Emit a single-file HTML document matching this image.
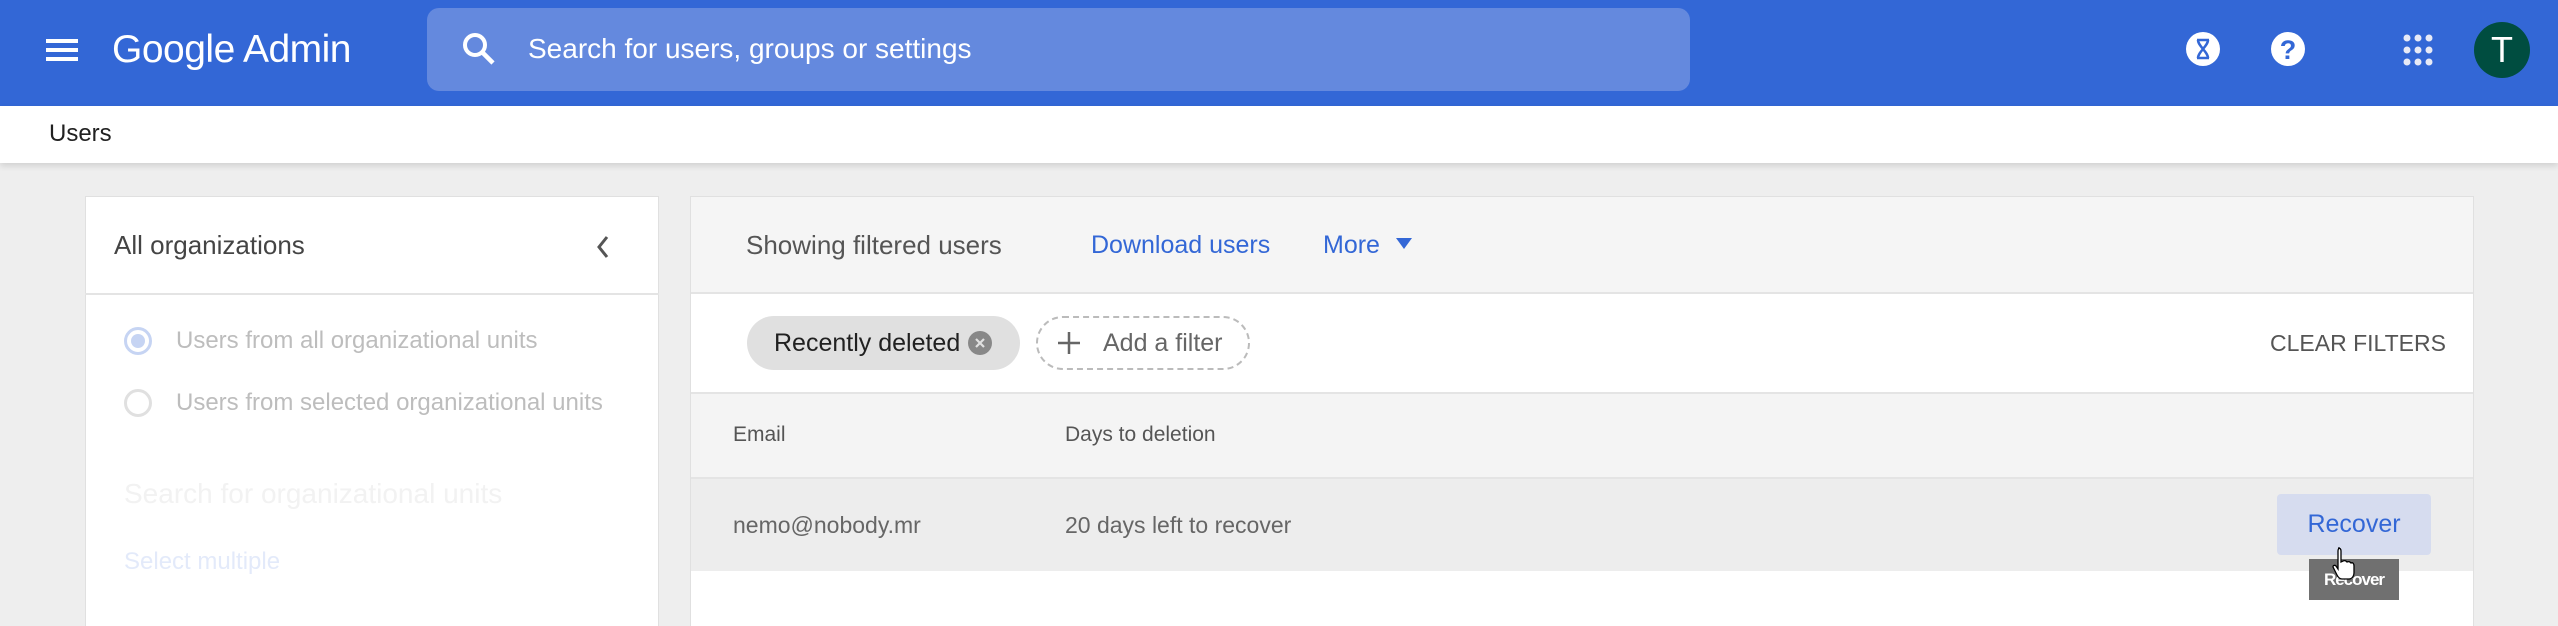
<!DOCTYPE html>
<html><head><style>
*{margin:0;padding:0;box-sizing:border-box}
html,body{width:2558px;height:626px;overflow:hidden}
body{background:#eeeeee;font-family:"Liberation Sans",Roboto,sans-serif;position:relative}
.a{position:absolute;white-space:nowrap}
</style></head><body>
<div class="a" style="left:0;top:0;width:2558px;height:106px;background:#3367d6"></div>
<svg class="a" style="left:44px;top:36px" width="36" height="28"><rect x="2" y="3" width="32" height="4" fill="#fff"/><rect x="2" y="12" width="32" height="4" fill="#fff"/><rect x="2" y="21" width="32" height="4" fill="#fff"/></svg>
<div class="a" style="left:112px;top:28px;font-size:39px;color:#fff;letter-spacing:-0.5px">Google Admin</div>
<div class="a" style="left:427px;top:8px;width:1263px;height:83px;background:#6489de;border-radius:12px"></div>
<svg class="a" style="left:460px;top:30px" width="40" height="40"><circle cx="15" cy="15" r="10" stroke="#fff" stroke-width="4" fill="none"/><line x1="22" y1="22" x2="33" y2="33" stroke="#fff" stroke-width="4.5"/></svg>
<div class="a" style="left:528px;top:33px;font-size:28px;color:#fff">Search for users, groups or settings</div>
<svg class="a" style="left:2180px;top:26px" width="350" height="52">
<circle cx="23" cy="23" r="17" fill="#fff"/><path d="M17 14h12M17 32h12M18 14c0 6 10 12 10 18M28 14c0 6-10 12-10 18" stroke="#3367d6" stroke-width="2.5" fill="none"/>
<circle cx="108" cy="23" r="17" fill="#fff"/><text x="108" y="33" text-anchor="middle" font-family="Liberation Sans" font-weight="bold" font-size="27" fill="#3367d6">?</text>
<g fill="#e8eaf6"><circle cx="227" cy="12" r="3.5"/><circle cx="238" cy="12" r="3.5"/><circle cx="249" cy="12" r="3.5"/><circle cx="227" cy="24" r="3.5"/><circle cx="238" cy="24" r="3.5"/><circle cx="249" cy="24" r="3.5"/><circle cx="227" cy="36" r="3.5"/><circle cx="238" cy="36" r="3.5"/><circle cx="249" cy="36" r="3.5"/></g>
</svg>
<div class="a" style="left:2474px;top:22px;width:56px;height:56px;border-radius:50%;background:#004d40;color:#fff;font-size:36px;text-align:center;line-height:56px">T</div>
<div class="a" style="left:0;top:106px;width:2558px;height:57px;background:#fff;box-shadow:0 3px 6px rgba(0,0,0,.12)"></div>
<div class="a" style="left:49px;top:120px;font-size:24px;color:#212121">Users</div>

<div class="a" style="left:85px;top:196px;width:574px;height:430px;background:#fff;border:1px solid #e0e0e0;border-bottom:none"></div>
<div class="a" style="left:85px;top:293px;width:574px;height:2px;background:#e4e4e4"></div>
<div class="a" style="left:114px;top:230px;font-size:26px;color:#444">All organizations</div>
<svg class="a" style="left:592px;top:232px" width="22" height="30"><path d="M15 5L7 15L15 25" stroke="#555" stroke-width="3" fill="none"/></svg>
<div class="a" style="left:124px;top:327px;width:28px;height:28px;border-radius:50%;border:3px solid #c6d4f3"></div>
<div class="a" style="left:131px;top:334px;width:14px;height:14px;border-radius:50%;background:#c6d4f3"></div>
<div class="a" style="left:124px;top:389px;width:28px;height:28px;border-radius:50%;border:3px solid #e0e0e0"></div>
<div class="a" style="left:176px;top:327px;font-size:24px;color:#bdbdbd">Users from all organizational units</div>
<div class="a" style="left:176px;top:389px;font-size:24px;color:#bdbdbd">Users from selected organizational units</div>
<div class="a" style="left:124px;top:478px;font-size:28px;color:#f2f2f2">Search for organizational units</div>
<div class="a" style="left:124px;top:548px;font-size:24px;color:#e3eafa">Select multiple</div>

<div class="a" style="left:690px;top:196px;width:1784px;height:430px;background:#fff;border:1px solid #e0e0e0;border-bottom:none"></div>
<div class="a" style="left:691px;top:197px;width:1782px;height:97px;background:#f5f5f5;border-bottom:2px solid #e4e4e4"></div>
<div class="a" style="left:746px;top:230px;font-size:26px;color:#555">Showing filtered users</div>
<div class="a" style="left:1091px;top:231px;font-size:25px;color:#3367d6">Download users</div>
<div class="a" style="left:1323px;top:231px;font-size:25px;color:#3367d6">More</div>
<svg class="a" style="left:1396px;top:238px" width="18" height="14"><path d="M0 0h16L8 11z" fill="#3367d6"/></svg>
<div class="a" style="left:747px;top:316px;width:273px;height:54px;border-radius:27px;background:#e0e0e0"></div>
<div class="a" style="left:774px;top:329px;font-size:25px;color:#212121">Recently deleted</div>
<svg class="a" style="left:967px;top:330px" width="26" height="26"><circle cx="13" cy="13" r="12" fill="#888"/><path d="M9 9l8 8M17 9l-8 8" stroke="#e0e0e0" stroke-width="2.2"/></svg>
<div class="a" style="left:1036px;top:316px;width:214px;height:54px;border-radius:27px;border:2px dashed #bbb"></div>
<svg class="a" style="left:1056px;top:330px" width="26" height="26"><path d="M13 2v22M2 13h22" stroke="#666" stroke-width="2.5"/></svg>
<div class="a" style="left:1103px;top:329px;font-size:25px;color:#666">Add a filter</div>
<div class="a" style="left:2270px;top:330px;font-size:23px;color:#555;font-weight:500">CLEAR FILTERS</div>
<div class="a" style="left:691px;top:392px;width:1782px;height:87px;background:#f4f4f4;border-top:2px solid #e4e4e4;border-bottom:2px solid #e4e4e4"></div>
<div class="a" style="left:733px;top:423px;font-size:21px;color:#555">Email</div>
<div class="a" style="left:1065px;top:423px;font-size:21px;color:#555">Days to deletion</div>
<div class="a" style="left:691px;top:479px;width:1782px;height:92px;background:#ededed"></div>
<div class="a" style="left:733px;top:512px;font-size:23px;color:#666">nemo@nobody.mr</div>
<div class="a" style="left:1065px;top:512px;font-size:23px;color:#666">20 days left to recover</div>
<div class="a" style="left:2277px;top:494px;width:154px;height:61px;background:#d6dcef;border-radius:4px;color:#3367d6;font-size:25px;text-align:center;line-height:61px">Recover</div>
<div class="a" style="left:2309px;top:559px;width:90px;height:41px;background:#707070;color:#fff;font-size:17px;text-align:center;line-height:41px;font-weight:bold;letter-spacing:-1px">Recover</div>
<svg class="a" style="left:2332px;top:546px" width="24" height="34"><path d="M6 2c2 0 3 1 3 3v11l2-1c2-1 3 0 4 1c2-1 3 0 4 1c2-1 3 1 3 3v7c0 3-2 6-5 6h-7c-2 0-4-2-5-4l-4-8c0-2 2-2 3-1l2 3V5c0-2 1-3 2-3z" fill="#fff" stroke="#000" stroke-width="1.3"/></svg>
</body></html>
